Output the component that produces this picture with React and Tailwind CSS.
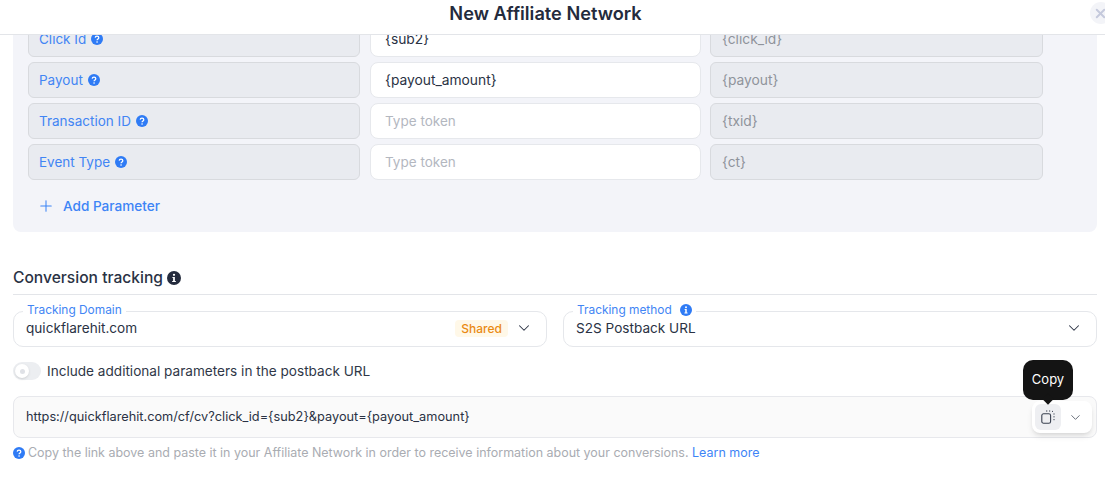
import { ChevronDown, Plus, X } from "lucide-react";

const rows = [
  { label: "Click Id", value: "{sub2}", token: "{click_id}" },
  { label: "Payout", value: "{payout_amount}", token: "{payout}" },
  { label: "Transaction ID", value: "", token: "{txid}" },
  { label: "Event Type", value: "", token: "{ct}" },
];

function QuestionIcon({ className }) {
  return (
    <svg className={className} viewBox="0 0 16 16">
      <circle cx="8" cy="8" r="8" fill="currentColor" />
      <path
        d="M5.6 6.2C5.7 4.9 6.7 4.2 8 4.2c1.4 0 2.4.8 2.4 2 0 1-.6 1.5-1.3 1.9-.6.4-.9.7-.9 1.3v.2"
        fill="none"
        stroke="#fff"
        strokeWidth="1.7"
      />
      <circle cx="8.1" cy="12" r="1.1" fill="#fff" />
    </svg>
  );
}

function InfoIcon({ className }) {
  return (
    <svg className={className} viewBox="0 0 16 16">
      <circle cx="8" cy="8" r="8" fill="currentColor" />
      <circle cx="8" cy="4.3" r="1.3" fill="#fff" />
      <path d="M6.2 6.8H9v4.6h1.1v1.2H5.9v-1.2H7V8H6.2z" fill="#fff" />
    </svg>
  );
}

function CopyIcon() {
  return (
    <svg className="w-[14px] h-[14px] text-[#3a4150]" viewBox="0 0 14 14" fill="none" stroke="currentColor">
      <rect x="0.8" y="3.8" width="8.8" height="9.4" rx="1.8" strokeWidth="1.1" />
      <path d="M5 1h1.3M8 1h1.2M11 1.1l1 .6M13 3.4v1.2M13 6.2v1.2M13 9v1.2" strokeWidth="1" />
    </svg>
  );
}

function FloatingField({ label, icon, children }) {
  return (
    <div className="relative flex-1 h-[36px] rounded-[10px] border border-[#e5e7eb] bg-white flex items-center pl-[12px] pr-[13px] pb-[2px] text-[13.6px] text-[#2a3244]">
      <div className="absolute left-[9px] top-[-9px] bg-white px-[4px] flex items-center gap-[8px] text-[11.9px] leading-[14px] text-[#4285f4]">
        {label}
        {icon}
      </div>
      {children}
    </div>
  );
}

export default function App() {
  return (
    <div
      className="h-[477px] w-full overflow-hidden bg-white flex flex-col"
      style={{ fontFamily: "Inter, sans-serif" }}
    >
      <div className="relative h-[35px] shrink-0 border-b border-[#e3e5e9] bg-white z-10 flex justify-center pt-[1px]">
        <h1 className="text-[18.2px] leading-[24px] font-semibold text-[#242b3d] pr-[14px]">New Affiliate Network</h1>
        <div className="absolute left-[1090px] top-[2px] w-[22px] h-[22px] rounded-full bg-[#f3f4f8] flex items-center pl-[3px]">
          <X className="w-[15px] h-[15px] text-[#c5c9dc]" strokeWidth={3} />
        </div>
      </div>

      <div className="flex-1 overflow-hidden px-[13px] pr-[8px]">
        <div className="-mt-[14px] h-[211px] rounded-b-[8px] bg-[#f3f4f9] pl-[15px]">
          <div className="flex flex-col gap-[5px]">
            {rows.map((row) => (
              <div key={row.label} className="flex h-[36px] text-[13.8px]">
                <div className="w-[332px] rounded-[6px] border border-[#d8dade] bg-[#e9ebf0] flex items-center gap-[5px] pl-[10px] text-[13.5px] text-[#4285f4]">
                  {row.label}
                  <QuestionIcon className="w-[12px] h-[12px] text-[#2f7bf5]" />
                </div>
                <div
                  className={`ml-[10px] w-[331px] rounded-[8px] border border-[#e6e8ec] bg-white flex items-center pl-[14px] ${
                    row.value ? "text-[#2a3244]" : "text-[13.5px] text-[#b3b7bf]"
                  }`}
                >
                  {row.value || "Type token"}
                </div>
                <div className="ml-[9px] w-[333px] rounded-[6px] border border-[#d8dade] bg-[#e9ebf0] flex items-center pl-[11px] text-[#8f939b]">
                  {row.token}
                </div>
              </div>
            ))}
          </div>
          <div className="flex items-center gap-[8px] pl-[9px] mt-[17px] text-[13.6px] leading-[18px] font-medium text-[#3d84f6]">
            <Plus className="w-[18px] h-[18px]" strokeWidth={1.4} />
            Add Parameter
          </div>
        </div>

        <div className="mt-[36px] h-[27px] border-b border-[#e3e5e9] flex items-start gap-[4px] text-[15.6px] leading-[20px] font-medium text-[#2a3244]">
          Conversion tracking
          <InfoIcon className="w-[14px] h-[14px] mt-[3px] text-[#242b3d]" />
        </div>

        <div className="mt-[16px] flex gap-[16px]">
          <FloatingField label="Tracking Domain">
            <span className="flex-1">quickflarehit.com</span>
            <span className="rounded-[4px] bg-[#fff8e8] px-[6px] text-[12px] leading-[17px] font-medium text-[#ea8a12] mr-[7px]">
              Shared
            </span>
            <ChevronDown className="w-[18px] h-[18px] text-[#2a3244]" strokeWidth={1.4} />
          </FloatingField>
          <FloatingField
            label="Tracking method"
            icon={<InfoIcon className="w-[12px] h-[12px] text-[#2f7bf5]" />}
          >
            <span className="flex-1">S2S Postback URL</span>
            <ChevronDown className="w-[18px] h-[18px] text-[#2a3244]" strokeWidth={1.4} />
          </FloatingField>
        </div>

        <div className="mt-[14px] flex items-center gap-[6px] text-[13.6px] leading-[20px] text-[#2f3747]">
          <div className="w-[28px] h-[18px] rounded-full bg-[#eceef1] flex items-center pl-[2px]">
            <div className="w-[14px] h-[14px] rounded-full bg-white flex items-center justify-center shadow-sm">
              <div className="w-[5px] h-[5px] rounded-full bg-[#dfe1e6]" />
            </div>
          </div>
          Include additional parameters in the postback URL
        </div>

        <div className="relative mt-[15px] h-[42px] rounded-[8px] border border-[#e7e8ec] bg-[#fafafa] flex items-center pl-[12px] text-[12.75px] text-[#2a3244]">
          https://quickflarehit.com/cf/cv?click_id={"{sub2}"}&payout={"{payout_amount}"}
          <div className="absolute right-[4px] top-[4px] w-[60px] h-[32px] rounded-[8px] bg-white shadow-md flex items-center pl-[3px]">
            <div className="w-[26px] h-[26px] rounded-[6px] bg-[#eeeff2] flex items-center justify-center">
              <CopyIcon />
            </div>
            <ChevronDown className="w-[15px] h-[15px] ml-[7px] text-[#555b68]" strokeWidth={1.4} />
          </div>
          <div className="absolute right-[23px] top-[-37px] w-[50px] h-[40px] rounded-[10px] bg-[#141414] flex items-center justify-center text-[13px] text-white">
            Copy
            <div className="absolute bottom-[-3px] left-[21px] w-[8px] h-[8px] rotate-45 bg-[#141414]" />
          </div>
        </div>

        <div className="mt-[7px] flex items-center gap-[3px] text-[12.47px] leading-[16px] text-[#a9acb2]">
          <QuestionIcon className="w-[12px] h-[12px] text-[#2f7bf5]" />
          <span>
            Copy the link above and paste it in your Affiliate Network in order to receive information about your conversions.{" "}
            <span className="text-[#3d84f6]">Learn more</span>
          </span>
        </div>
      </div>
    </div>
  );
}
